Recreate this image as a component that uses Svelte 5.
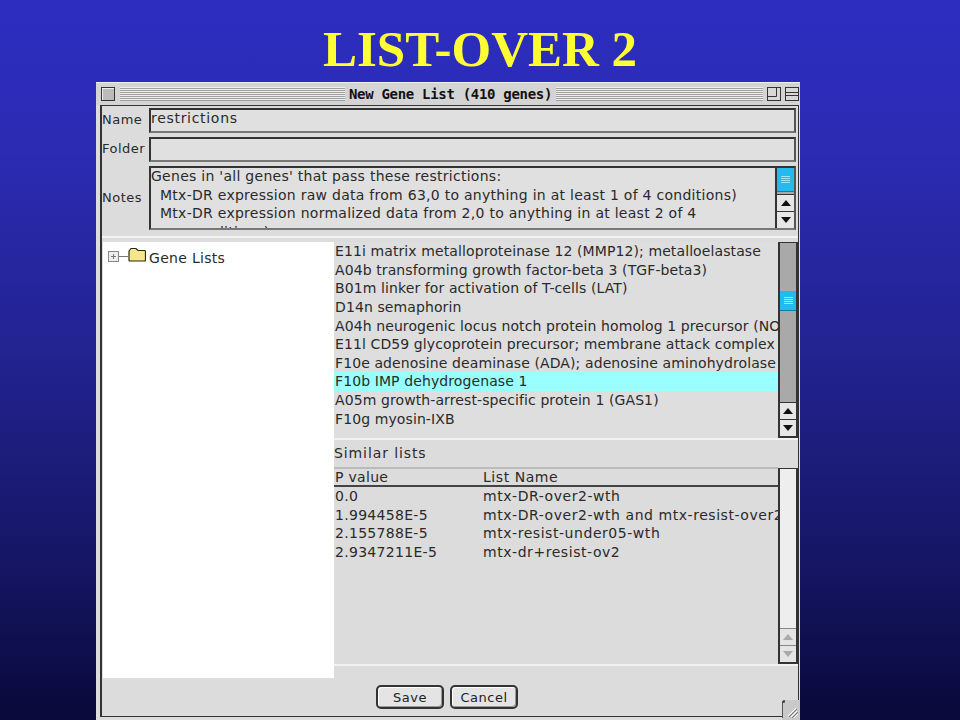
<script>
  const genes = [
    'E11i matrix metalloproteinase 12 (MMP12); metalloelastase',
    'A04b transforming growth factor-beta 3 (TGF-beta3)',
    'B01m linker for activation of T-cells (LAT)',
    'D14n semaphorin',
    'A04h neurogenic locus notch protein homolog 1 precursor (NO',
    'E11l CD59 glycoprotein precursor; membrane attack complex',
    'F10e adenosine deaminase (ADA); adenosine aminohydrolase',
    'F10b IMP dehydrogenase 1',
    'A05m growth-arrest-specific protein 1 (GAS1)',
    'F10g myosin-IXB'
  ];
  const similar = [
    ['0.0', 'mtx-DR-over2-wth'],
    ['1.994458E-5', 'mtx-DR-over2-wth and mtx-resist-over2'],
    ['2.155788E-5', 'mtx-resist-under05-wth'],
    ['2.9347211E-5', 'mtx-dr+resist-ov2']
  ];
</script>

<main class="slide">
  <h1>LIST-OVER 2</h1>
  <section class="window">
    <header class="titlebar">
      <span class="box close"></span>
      <span class="stripes left"></span>
      <strong>New Gene List (410 genes)</strong>
      <span class="stripes"></span>
      <svg class="wbtn" viewBox="0 0 14 14">
        <rect x=".5" y=".5" width="13" height="13" fill="#d8d8d8" stroke="#333" />
        <path d="M.5 9.500H9.500V.5" fill="none" stroke="#333" />
      </svg>
      <svg class="wbtn" viewBox="0 0 14 14">
        <rect x=".5" y=".5" width="13" height="13" fill="#d8d8d8" stroke="#333" />
        <path d="M.5 5.500H13.500M.5 8.500H13.500" fill="none" stroke="#333" />
      </svg>
    </header>
    <div class="body">
      <div class="fields">
        <div class="field">
          <span class="label">Name</span>
          <div class="input name">restrictions</div>
        </div>
        <div class="field">
          <span class="label">Folder</span>
          <div class="input"></div>
        </div>
        <div class="field notes-row">
          <span class="label">Notes</span>
          <div class="input notes">
            <div class="notes-text">
              <div>Genes in 'all genes' that pass these restrictions:</div>
              <div class="ind">Mtx-DR expression raw data from 63,0 to anything in at least 1 of 4 conditions)</div>
              <div class="ind">Mtx-DR expression normalized data from 2,0 to anything in at least 2 of 4</div>
              <div class="ind2">conditions)</div>
            </div>
            <div class="scroll small">
              <div class="thumb top"><i></i><i></i><i></i><i></i></div>
              <div class="track"></div>
              <div class="arrow"><svg viewBox="0 0 10 6"><path d="M5 0 10 6H0z" /></svg></div>
              <div class="arrow"><svg viewBox="0 0 10 6"><path d="M0 0H10L5 6z" /></svg></div>
            </div>
          </div>
        </div>
      </div>

      <div class="split">
        <aside class="tree">
          <svg class="expander" viewBox="0 0 20 11">
            <rect x=".5" y=".5" width="10" height="10" fill="#eee" stroke="#888" />
            <path d="M3 5.500h5M5.500 3v5M11 5.500h9" stroke="#777" fill="none" />
          </svg>
          <svg class="folder" viewBox="0 0 18 15">
            <path d="M1 4 3 1.500h5l2 2h6.500q1 0 1 1V13q0 1-1 1H2q-1 0-1-1z" fill="#f6e58c" stroke="#2b2a12" stroke-width="1.200" />
          </svg>
          <span>Gene Lists</span>
        </aside>

        <div class="right">
          <div class="list-wrap">
            <ul class="genes">
              {#each genes as gene, i}
                <li class:selected={i === 7}>{gene}</li>
              {/each}
            </ul>
            <div class="scroll big">
              <div class="track t1"></div>
              <div class="thumb mid"><i></i><i></i><i></i><i></i></div>
              <div class="track"></div>
              <div class="arrow"><svg viewBox="0 0 10 6"><path d="M5 0 10 6H0z" /></svg></div>
              <div class="arrow"><svg viewBox="0 0 10 6"><path d="M0 0H10L5 6z" /></svg></div>
            </div>
          </div>

          <div class="similar-label">Similar lists</div>

          <div class="table-wrap">
            <div class="table">
              <div class="row head"><span>P value</span><span>List Name</span></div>
              {#each similar as [p, name]}
                <div class="row"><span>{p}</span><span>{name}</span></div>
              {/each}
            </div>
            <div class="scroll off">
              <div class="track"></div>
              <div class="arrow"><svg viewBox="0 0 10 6"><path d="M5 0 10 6H0z" /></svg></div>
              <div class="arrow"><svg viewBox="0 0 10 6"><path d="M0 0H10L5 6z" /></svg></div>
            </div>
          </div>
        </div>
      </div>

      <div class="actions">
        <button type="button">Save</button>
        <button type="button">Cancel</button>
      </div>
    </div>
    <svg class="grip" viewBox="0 0 18 20">
      <path d="M0 20V2H2V0H18V20z" fill="#c9c9c9" />
      <path d="M0 18V2H2V0" fill="none" stroke="#333" stroke-width="1.500" />
      <path d="M6 16 14 8M9 17 15 11M12 18 16 14" stroke="#fff" fill="none" />
      <path d="M7 17 15 9M10 18 16 12" stroke="#777" fill="none" />
    </svg>
  </section>
</main>

<style>
  :global(body) {
    margin: 0;
    background: #14145a;
  }

  .slide {
    width: 960px;
    height: 720px;
    overflow: hidden;
    display: flex;
    flex-direction: column;
    background: linear-gradient(#2d2dc0 0%, #2b2bb4 20%, #22228f 50%, #17176a 75%, #09093a 100%);
    font-family: "DejaVu Sans", sans-serif;
    font-size: 14px;
    color: #2a2a2a;
  }

  h1 {
    flex: none;
    margin: 0;
    height: 82px;
    padding-top: 20px;
    box-sizing: border-box;
    text-align: center;
    font: bold 51px/58px "Liberation Serif", serif;
    color: #ffff33;
  }

  .window {
    position: relative;
    flex: none;
    box-sizing: border-box;
    width: 704px;
    height: 638px;
    margin-left: 96px;
    background: #dcdcdc;
    border-top: 1px solid #eee;
  }

  .titlebar {
    display: flex;
    align-items: center;
    gap: 4px;
    height: 22px;
    padding: 0 1px 0 5px;
    background: #d4d4d4;
  }

  .titlebar strong {
    font-family: "DejaVu Sans Mono", monospace;
    font-size: 14px;
    letter-spacing: -0.3px;
    color: #111;
    white-space: nowrap;
    font-weight: 700;
  }

  .stripes {
    flex: 207;
    height: 14px;
    background: repeating-linear-gradient(#efefef 0 1px, #a0a0a0 1px 2px);
  }

  .stripes.left {
    flex: 225;
  }

  .box {
    flex: none;
    width: 12px;
    height: 12px;
    border: 1px solid #333;
    background: #bbb;
    box-shadow: inset 1px 1px 0 #eee;
  }

  .close {
    margin-right: 1px;
  }

  .wbtn {
    flex: none;
    width: 14px;
    height: 14px;
  }

  .body {
    height: 612px;
    box-sizing: border-box;
    margin: 0 1px 0 4px;
    border: 1px solid #333;
    border-left-width: 2px;
    display: flex;
    flex-direction: column;
  }

  .fields {
    display: flex;
    flex-direction: column;
    gap: 4px;
    padding: 2px 2px 6px 0;
    border-bottom: 2px solid #f2f2f2;
  }

  .field {
    display: flex;
    align-items: center;
  }

  .label {
    flex: none;
    width: 47px;
    box-sizing: border-box;
    margin-top: -2px;
    font-size: 13px;
    letter-spacing: 0.5px;
    white-space: nowrap;
  }

  .input {
    flex: 1;
    box-sizing: border-box;
    height: 25px;
    padding: 0;
    line-height: 17px;
    border: 2px solid #333;
    border-right-color: #555;
    border-bottom-color: #777;
    background: #e0e0e0;
  }

  .name {
    letter-spacing: 0.7px;
  }

  .notes {
    height: 64px;
    display: flex;
    padding: 0;
    overflow: hidden;
  }

  .notes-text {
    flex: 1;
    min-width: 0;
    margin-top: -1px;
    line-height: 18.500px;
    letter-spacing: 0.27px;
    overflow: hidden;
    white-space: nowrap;
  }

  .ind {
    padding-left: 9px;
  }

  .ind2 {
    padding-left: 38px;
  }

  .split {
    flex: none;
    display: flex;
    height: 436px;
    margin-top: 4px;
  }

  .tree {
    flex: none;
    width: 231px;
    margin-left: 1px;
    box-sizing: border-box;
    background: #fff;
    padding: 8px 0 0 5px;
    display: flex;
    align-items: flex-start;
    letter-spacing: 0.3px;
  }

  .expander {
    width: 20px;
    height: 11px;
    margin: 1px 0 0;
  }

  .folder {
    width: 18px;
    height: 15px;
    margin-top: -3px;
  }

  .tree span {
    margin-left: 3px;
    line-height: 16px;
  }

  .right {
    flex: 1;
    min-width: 0;
    display: flex;
    flex-direction: column;
  }

  .list-wrap {
    display: flex;
    height: 196px;
    border-bottom: 2px solid #f2f2f2;
  }

  .genes {
    flex: 1;
    min-width: 0;
    margin: 0;
    padding: 0;
    list-style: none;
    overflow: hidden;
    white-space: nowrap;
    letter-spacing: 0.1px;
    background: #dedede;
  }

  .genes li {
    height: 18.650px;
    line-height: 18.650px;
    padding-left: 1px;
  }

  .selected {
    background: #99ffff;
  }

  .scroll {
    flex: none;
    width: 20px;
    display: flex;
    flex-direction: column;
    box-sizing: border-box;
    border: 2px solid #333;
    border-top-width: 1px;
    background: #a9a9a9;
  }

  .small {
    width: 19px;
    border-top: none;
    border-bottom: none;
    border-right: none;
  }

  .track {
    flex: 1;
    background: #a9a9a9;
  }

  .t1 {
    flex: none;
    height: 48px;
  }

  .thumb {
    flex: none;
    height: 19px;
    background: #22bbee;
    border-bottom: 1px solid #0b7fa8;
    display: flex;
    flex-direction: column;
    justify-content: center;
    align-items: center;
    gap: 1px;
  }

  .top {
    height: 23px;
  }

  .thumb i {
    width: 9px;
    height: 1px;
    background: #9fe4f6;
  }

  .arrow {
    flex: none;
    height: 16px;
    display: flex;
    align-items: center;
    justify-content: center;
    background: #e6e6e6;
    border-top: 1px solid #333;
  }

  .arrow svg {
    width: 10px;
    height: 6px;
    fill: #111;
  }

  .similar-label {
    height: 27px;
    line-height: 27px;
    letter-spacing: 0.9px;
    border-bottom: 2px solid #bbb;
    margin-right: 20px;
  }

  .table-wrap {
    display: flex;
    height: 196px;
    border-bottom: 2px solid #f2f2f2;
    margin-top: -1px;
  }

  .table {
    flex: 1;
    min-width: 0;
    overflow: hidden;
    white-space: nowrap;
  }

  .row {
    display: flex;
    height: 18.500px;
    line-height: 18.500px;
    padding-left: 1px;
    letter-spacing: 0.55px;
  }

  .row span:first-child {
    flex: none;
    width: 148px;
    letter-spacing: 0.3px;
  }

  .head {
    height: 17px;
    border-bottom: 2px solid #444;
  }

  .off {
    background: #eee;
  }

  .off .track {
    background: #eee;
  }

  .off .arrow {
    background: #e4e4e4;
    border-top-color: #888;
  }

  .off .arrow svg {
    fill: #aaa;
  }

  .actions {
    display: flex;
    gap: 6px;
    padding: 7px 0 0 274px;
  }

  button {
    width: 68px;
    height: 24px;
    padding: 0;
    font: inherit;
    font-size: 13px;
    letter-spacing: 0.5px;
    color: #222;
    background: #e4e4e4;
    border: 2px solid #333;
    border-radius: 5px;
    box-shadow: inset -1px -1px 0 #999, inset 1px 1px 0 #fff;
  }

  .grip {
    position: absolute;
    right: 0;
    bottom: 0;
    width: 18px;
    height: 20px;
  }
</style>
